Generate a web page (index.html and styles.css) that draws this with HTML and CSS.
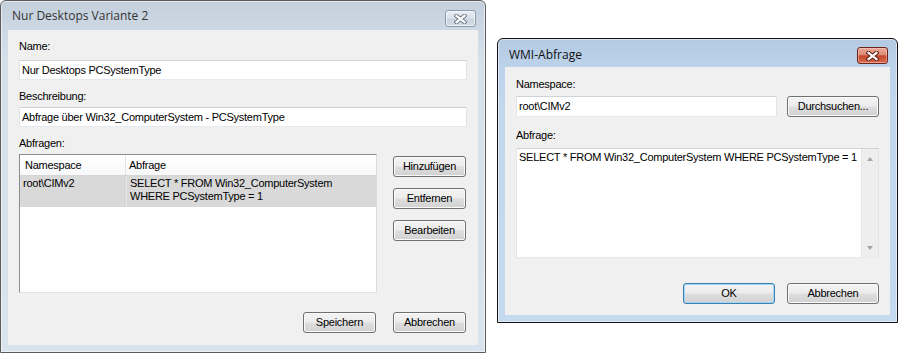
FILE: index.html
```html
<!DOCTYPE html>
<html lang="de">
<head>
<meta charset="utf-8">
<title>WMI-Abfrage</title>
<link rel="stylesheet" href="styles.css">
</head>
<body>
<div class="desk">
  <div class="win win-left win-inactive">
    <div class="titlebar">
      <span class="title title-left">Nur Desktops Variante 2</span>
      <span class="close close-inactive">
        <svg width="13" height="10" viewBox="0 0 13 10"><path d="M2.5 1.8L10.5 8.2M10.5 1.8L2.5 8.2" stroke="#6f7b88" stroke-width="4.2" stroke-linecap="square"/><path d="M2.5 1.8L10.5 8.2M10.5 1.8L2.5 8.2" stroke="#fff" stroke-width="2.2" stroke-linecap="square"/></svg>
      </span>
    </div>
    <div class="client client-left">
      <div class="lbl">Name:</div>
      <div class="field field-left">Nur Desktops PCSystemType</div>
      <div class="lbl lbl-gap">Beschreibung:</div>
      <div class="field field-left field-desc">Abfrage über Win32_ComputerSystem - PCSystemType</div>
      <div class="lbl lbl-gap">Abfragen:</div>
      <div class="list-area">
        <div class="listview">
          <div class="lv-head">
            <div class="col1 head-col1">Namespace</div>
            <div class="col2 head-col2">Abfrage</div>
          </div>
          <div class="lv-item">
            <div class="col1 item-col1">root\CIMv2</div>
            <div class="col2 item-col2">SELECT * FROM Win32_ComputerSystem<br>WHERE PCSystemType = 1</div>
          </div>
        </div>
        <div class="side-buttons">
          <button class="btn btn-left">Hinzufügen</button>
          <button class="btn btn-left">Entfernen</button>
          <button class="btn btn-left">Bearbeiten</button>
        </div>
      </div>
      <div class="footer footer-left">
        <button class="btn btn-left">Speichern</button>
        <button class="btn btn-left">Abbrechen</button>
      </div>
    </div>
  </div>

  <div class="win win-right win-active">
    <div class="titlebar">
      <span class="title title-right">WMI-Abfrage</span>
      <span class="close close-active">
        <svg width="13" height="10" viewBox="0 0 13 10"><path d="M2.5 1.8L10.5 8.2M10.5 1.8L2.5 8.2" stroke="#5a1b10" stroke-width="4.2" stroke-linecap="square"/><path d="M2.5 1.8L10.5 8.2M10.5 1.8L2.5 8.2" stroke="#fff" stroke-width="2.2" stroke-linecap="square"/></svg>
      </span>
    </div>
    <div class="client client-right">
      <div class="lbl">Namespace:</div>
      <div class="ns-row">
        <div class="field field-ns">root\CIMv2</div>
        <button class="btn btn-right">Durchsuchen...</button>
      </div>
      <div class="lbl lbl-gap-right">Abfrage:</div>
      <div class="memo">
        <div class="memo-text">SELECT * FROM Win32_ComputerSystem WHERE PCSystemType = 1</div>
        <div class="vscroll">
          <span class="arrow-up"></span>
          <span class="arrow-down"></span>
        </div>
      </div>
      <div class="footer footer-right">
        <button class="btn btn-right btn-default">OK</button>
        <button class="btn btn-right">Abbrechen</button>
      </div>
    </div>
  </div>
</div>
</body>
</html>
```

FILE: styles.css
```css
html, body {
  margin: 0;
  padding: 0;
  background: #ffffff;
}

body {
  font-family: "Liberation Sans", Arial, sans-serif;
  font-size: 11px;
  letter-spacing: -0.25px;
  color: #000;
}

.desk {
  display: flex;
  align-items: flex-start;
  gap: 11px;
}

/* window frames */
.win {
  box-sizing: border-box;
  display: flex;
  flex-direction: column;
  border: 1px solid;
  border-radius: 6px 6px 0 0;
  padding: 0 7px 7px;
  box-shadow: inset 0 0 0 1px rgba(255, 255, 255, 0.55);
}

.win-left {
  width: 486px;
  height: 353px;
}

.win-right {
  width: 401px;
  height: 285px;
  margin-top: 38px;
}

.win-inactive {
  border-color: #5b5b5b;
  background: linear-gradient(#c3cfdc 0, #cdd8e4 28px, #d6e0eb 60px, #d9e3ee 100%);
}

.win-active {
  border-color: #111;
  background: linear-gradient(#b4cae3 0, #bcd1ea 27px, #c2d6ee 60px, #c5d9ef 100%);
}

.titlebar {
  display: flex;
  justify-content: space-between;
  align-items: flex-start;
  flex: none;
}

.win-left .titlebar { height: 29px; }
.win-right .titlebar { height: 28px; }

.title {
  font-family: "Open Sans", "Noto Sans", sans-serif;
  font-size: 12px;
  letter-spacing: 0;
  line-height: 16px;
  margin-left: 4px;
}

.title-left {
  margin-top: 7px;
  color: #333;
}

.title-right {
  margin-top: 8px;
  color: #111;
}

.close {
  box-sizing: border-box;
  width: 31px;
  height: 17px;
  margin-right: 2px;
  border-radius: 3px;
  border: 1px solid;
  display: flex;
  align-items: center;
  justify-content: center;
}

.close svg { display: block; }

.close-inactive {
  margin-top: 9px;
  border-color: #8d9aa9;
  background: linear-gradient(#e8edf3 0%, #d9e1ea 48%, #c9d4df 52%, #d3dce6 100%);
  box-shadow: inset 0 0 0 1px rgba(255, 255, 255, 0.6);
}

.close-active {
  margin-top: 8px;
  border-color: #6b2417;
  background: linear-gradient(#eaab9b 0%, #dc8a74 45%, #c6472d 52%, #d56a4c 100%);
  box-shadow: inset 0 0 0 1px rgba(255, 210, 195, 0.5);
}

/* client area */
.client {
  flex: 1;
  background: #f0f0f0;
  display: flex;
  flex-direction: column;
}

.client-left {
  padding: 10px 0 0 11px;
}

.client-right {
  padding: 11px 11px 0 11px;
}

.lbl {
  line-height: 13px;
  height: 13px;
  white-space: nowrap;
}

.client-left .lbl + .field { margin-top: 7px; }
.client-left .lbl-gap { margin-top: 10px; }
.client-left .lbl-gap + .field { margin-top: 4px; }

.field {
  box-sizing: border-box;
  background: #fff;
  border: 1px solid;
  border-color: #cfd2d8 #e2e4e9 #e6e9ee #e2e4e9;
  padding: 0 2px;
  white-space: nowrap;
  overflow: hidden;
}

.field-left {
  width: 448px;
  height: 20px;
  line-height: 18px;
}

/* list view */
.list-area {
  display: flex;
  align-items: flex-start;
  margin-top: 4px;
}

.listview {
  box-sizing: border-box;
  width: 358px;
  height: 139px;
  background: #fff;
  border: 1px solid;
  border-color: #8c8c8c #dadada #e3e3e3 #8c8c8c;
}

.lv-head {
  display: flex;
  height: 20px;
  line-height: 20px;
  border-bottom: 1px solid #d5d5d5;
  background: linear-gradient(#ffffff, #f7f8f9);
}

.col1 {
  box-sizing: border-box;
  width: 106px;
  flex: none;
}

.col2 {
  flex: 1;
  box-sizing: border-box;
}

.head-col1 {
  padding-left: 5px;
  border-right: 1px solid #e3e3e3;
}

.head-col2 {
  padding-left: 3px;
}

.lv-item {
  display: flex;
  background: #d9d9d9;
  line-height: 13px;
  padding: 1px 0 4px;
}

.item-col1 {
  padding-left: 3px;
}

.item-col2 {
  padding-left: 3px;
  border-left: 1px solid #e6e6e6;
  margin-top: -1px;
  margin-bottom: -4px;
  padding-top: 1px;
  padding-bottom: 4px;
}

.side-buttons {
  display: flex;
  flex-direction: column;
  gap: 11px;
  margin-left: 16px;
  margin-top: 2px;
}

/* buttons */
.btn {
  box-sizing: border-box;
  height: 21px;
  padding: 0;
  border: 1px solid #707070;
  border-radius: 3px;
  background: linear-gradient(#f3f3f3 0%, #ececec 48%, #dedede 52%, #d1d1d1 100%);
  box-shadow: inset 0 0 0 1px #fbfbfb;
  font-family: inherit;
  font-size: inherit;
  letter-spacing: inherit;
  color: #000;
  line-height: 19px;
  text-align: center;
}

.btn-left { width: 73px; }
.btn-right { width: 92px; }

.btn-default {
  border-color: #3c7fb1;
  box-shadow: inset 0 0 0 1px #9ed8f6;
}

.footer {
  display: flex;
  justify-content: flex-end;
}

.footer-left {
  margin-top: 19px;
  padding-right: 12px;
  gap: 17px;
}

.footer-right {
  margin-top: 25px;
  gap: 12px;
}

/* right dialog */
.ns-row {
  display: flex;
  align-items: flex-start;
  gap: 10px;
  margin-top: 5px;
}

.field-ns {
  width: 261px;
  height: 21px;
  line-height: 19px;
}

.lbl-gap-right {
  margin-top: 12px;
}

.memo {
  box-sizing: border-box;
  margin-top: 6px;
  width: 363px;
  height: 110px;
  display: flex;
  background: #fff;
  border: 1px solid;
  border-color: #cfd2d8 #e2e4e9 #e6e9ee #e2e4e9;
}

.memo-text {
  flex: 1;
  padding: 2px 2px 0 2px;
  line-height: 13px;
  white-space: nowrap;
  overflow: hidden;
}

.vscroll {
  width: 17px;
  flex: none;
  background: #eeeeee;
  border-left: 1px solid #e4e4e4;
  display: flex;
  flex-direction: column;
  justify-content: space-between;
  align-items: center;
  padding: 8px 0 7px;
  box-sizing: border-box;
}

.arrow-up,
.arrow-down {
  width: 0;
  height: 0;
  border-left: 3.5px solid transparent;
  border-right: 3.5px solid transparent;
}

.arrow-up {
  border-bottom: 4px solid #a6a6a6;
}

.arrow-down {
  border-top: 4px solid #a6a6a6;
}
```
